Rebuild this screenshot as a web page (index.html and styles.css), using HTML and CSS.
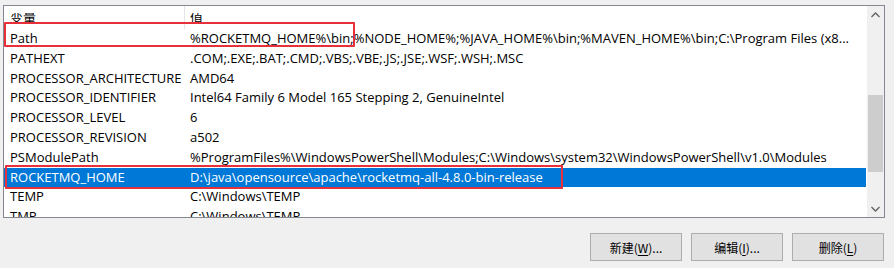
FILE: index.html
```html
<!DOCTYPE html>
<html lang="zh-CN">
<head>
<meta charset="utf-8">
<link rel="stylesheet" href="styles.css">
</head>
<body>
<div class="page">
  <div class="listbox">
    <div class="content">
      <div class="header">
        <div class="hcell name"><span class="hlabel">变量</span></div>
        <div class="hcell value"><span class="hlabel">值</span></div>
      </div>
      <div class="row"><span class="name">Path</span><span class="value">%ROCKETMQ_HOME%\bin;%NODE_HOME%;%JAVA_HOME%\bin;%MAVEN_HOME%\bin;C:\Program Files (x8...</span></div>
      <div class="row"><span class="name">PATHEXT</span><span class="value">.COM;.EXE;.BAT;.CMD;.VBS;.VBE;.JS;.JSE;.WSF;.WSH;.MSC</span></div>
      <div class="row"><span class="name">PROCESSOR_ARCHITECTURE</span><span class="value">AMD64</span></div>
      <div class="row"><span class="name">PROCESSOR_IDENTIFIER</span><span class="value">Intel64 Family 6 Model 165 Stepping 2, GenuineIntel</span></div>
      <div class="row"><span class="name">PROCESSOR_LEVEL</span><span class="value">6</span></div>
      <div class="row"><span class="name">PROCESSOR_REVISION</span><span class="value">a502</span></div>
      <div class="row"><span class="name">PSModulePath</span><span class="value">%ProgramFiles%\WindowsPowerShell\Modules;C:\Windows\system32\WindowsPowerShell\v1.0\Modules</span></div>
      <div class="row selected"><span class="name">ROCKETMQ_HOME</span><span class="value">D:\java\opensource\apache\rocketmq-all-4.8.0-bin-release</span></div>
      <div class="row"><span class="name">TEMP</span><span class="value">C:\Windows\TEMP</span></div>
      <div class="row"><span class="name">TMP</span><span class="value">C:\Windows\TEMP</span></div>
      <div class="mark mark-path"></div>
      <div class="mark mark-rocket"></div>
    </div>
    <div class="scrollbar">
      <div class="arrow">
        <svg width="9" height="6" viewBox="0 0 9 6"><path d="M0.5 5 L4.5 1 L8.5 5" fill="none" stroke="#606060" stroke-width="1.3"/></svg>
      </div>
      <div class="track"><div class="thumb"></div></div>
      <div class="arrow">
        <svg width="9" height="6" viewBox="0 0 9 6"><path d="M0.5 1 L4.5 5 L8.5 1" fill="none" stroke="#606060" stroke-width="1.3"/></svg>
      </div>
    </div>
  </div>
  <div class="buttons">
    <button class="btn">新建(<u>W</u>)...</button>
    <button class="btn">编辑(<u>I</u>)...</button>
    <button class="btn">删除(<u>L</u>)</button>
  </div>
</div>
</body>
</html>
```
FILE: styles.css
```css
html, body {
  margin: 0;
  padding: 0;
  background: #f0f0f0;
}
body {
  font-family: "Open Sans", "Noto Sans", "Noto Sans CJK SC", sans-serif;
  font-size: 13px;
  color: #000;
}
.page {
  width: 894px;
  height: 268px;
  padding: 5px 0 0 3px;
  box-sizing: border-box;
}
.listbox {
  width: 882px;
  height: 213px;
  box-sizing: border-box;
  border: 1px solid #828790;
  background: #fff;
  display: grid;
  grid-template-columns: 1fr 17px;
}
.content {
  position: relative;
  overflow: hidden;
}
.header {
  display: flex;
  height: 23px;
}
.hcell {
  height: 23px;
  box-sizing: border-box;
  padding-top: 7px;
}
.hlabel {
  display: block;
  height: 11px;
  overflow: hidden;
  line-height: 8px;
  font-family: "Noto Sans CJK SC", sans-serif;
  font-size: 13px;
}
.hcell.name {
  width: 181px;
  padding-left: 6px;
  border-right: 1px solid #e5e5e5;
}
.hcell.value {
  padding-left: 5px;
}
.row {
  display: flex;
  height: 19.8px;
  line-height: 19.8px;
  white-space: nowrap;
  margin-right: 1px;
}
.row .name {
  width: 176px;
  padding-left: 6px;
  flex: none;
}
.row .value {
  padding-left: 4px;
}
.row.selected {
  background: #0078d7;
  color: #fff;
}
.mark {
  position: absolute;
  border: 2px solid #e8303a;
  border-radius: 1px;
  pointer-events: none;
}
.mark-path {
  left: 0;
  top: 16px;
  width: 347px;
  height: 21px;
}
.mark-rocket {
  left: 1px;
  top: 159px;
  width: 554px;
  height: 20px;
}
.scrollbar {
  background: #f0f0f0;
  display: flex;
  flex-direction: column;
}
.arrow {
  height: 17px;
  display: flex;
  align-items: center;
  justify-content: center;
}
.track {
  flex: 1;
  padding-top: 72px;
}
.thumb {
  height: 77px;
  background: #cdcdcd;
  margin: 0 1px;
}
.buttons {
  display: flex;
  justify-content: flex-end;
  gap: 9px;
  margin-top: 15px;
  padding-right: 10px;
}
.btn {
  width: 92px;
  height: 28px;
  background: #e1e1e1;
  border: 1px solid #adadad;
  border-radius: 0;
  font-family: "Noto Sans CJK SC", "Open Sans", sans-serif;
  font-size: 12px;
  color: #000;
  padding: 0;
}
.btn u {
  text-underline-offset: 2px;
}
```
